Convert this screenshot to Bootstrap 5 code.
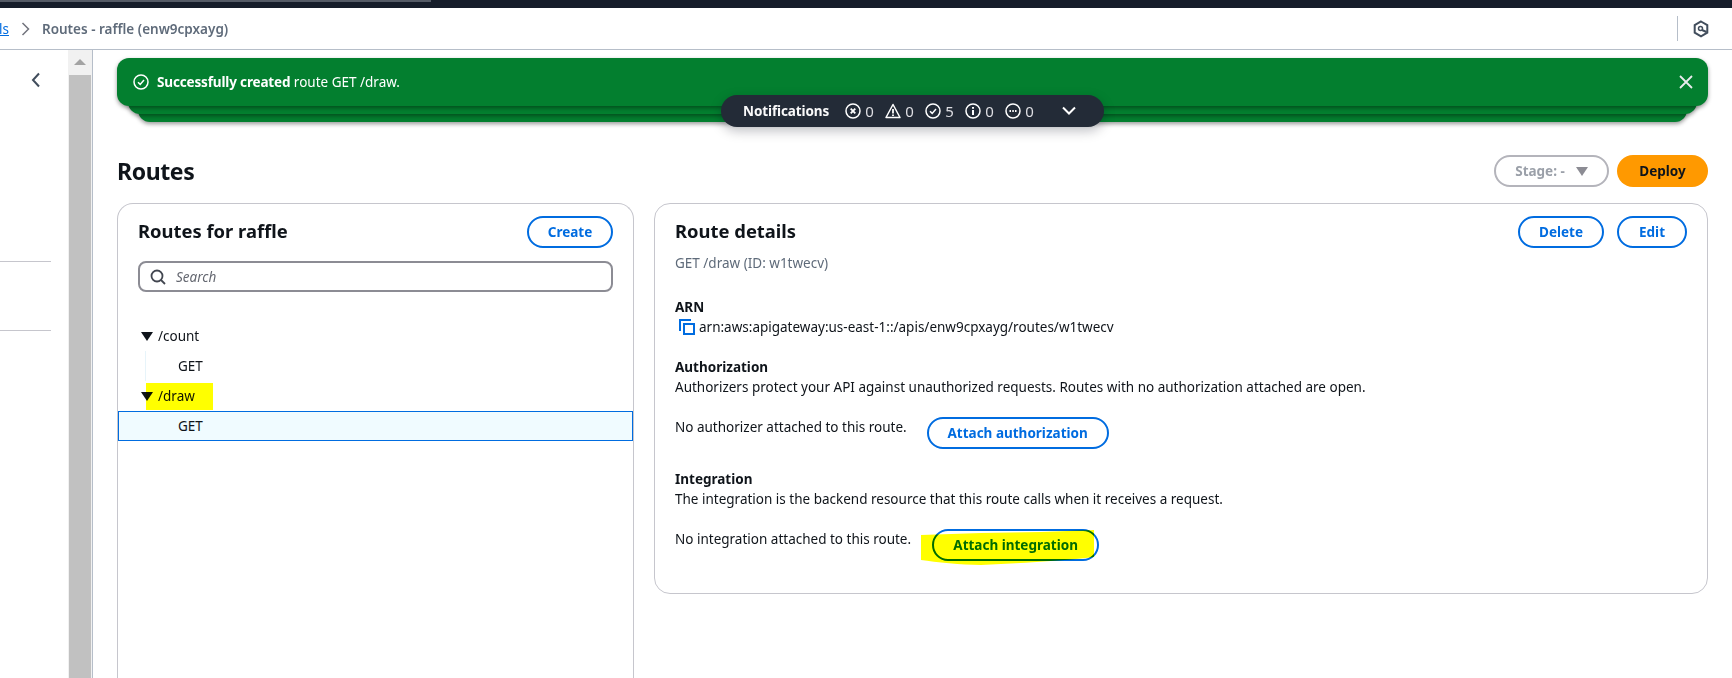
<!DOCTYPE html>
<html lang="en">

<head>
    <meta charset="UTF-8">
    <meta name="viewport" content="width=device-width, initial-scale=1.0">
    <title>Routes - raffle</title>
    <link href="https://cdn.jsdelivr.net/npm/bootstrap@5.3.0/dist/css/bootstrap.min.css" rel="stylesheet">
    <style>
        html, body { height: 678px; overflow: hidden; }
        body { font-family: "Noto Sans", "Open Sans", sans-serif; font-size: 13.5px; line-height: 20px; color: #0f141a; background: #fff; }
        .app-top { height: 8px; background: #161d2a; }
        .app-top-thumb { width: 431px; height: 2px; background: #555b66; }
        .crumb-bar { height: 42px; border-bottom: 1px solid #b6bec9; }
        .crumb-link { color: #006ce0; text-decoration: underline; width: 9px; overflow: hidden; direction: rtl; }
        .crumb-now { color: #5f6b7a; font-weight: 600; margin-left: 12px; }
        .crumb-sep { margin-left: 12px; }
        .crumb-tool { width: 55px; height: 25px; border-left: 1px solid #b6bec9; padding-left: 15px; }
        .app-body { height: 628px; }
        .side-nav { width: 68px; }
        .side-line { border-top: 1px solid #c6c6cd; width: 51px; }
        .side-back { margin: 19px 0 0 31px; }
        .side-line-a { margin-top: 172px; }
        .side-line-b { margin-top: 68px; }
        .fake-scroll { width: 25px; background: #f1f1f1; border-right: 1px solid #b6bec9; }
        .fake-scroll-arrow { height: 25px; padding-top: 9px; }
        .fake-scroll-thumb { background: #c1c1c1; width: 22px; margin-left: 1px; height: 603px; }
        .page-main { padding: 8px 24px 0; width: 1639px; }
        .flash-stack { height: 64px; }
        .flash-top { height: 48px; background: #037f2f; color: #fff; border-radius: 12px; padding: 0 16px; box-shadow: 0 2px 4px rgba(0,0,0,.4); }
        .flash-top strong { letter-spacing: -.15px; }
        .flash-layer { left: 11px; right: 11px; top: 10px; height: 46px; background: #037f2f; border-radius: 12px; box-shadow: 0 2px 4px rgba(0,0,0,.4); }
        .flash-layer-b { left: 21px; right: 21px; top: 18px; }
        .flash-close { margin-left: auto; margin-right: -1px; }
        .notif-pill { left: 604px; top: 37px; width: 383px; height: 32px; background: #232b37; color: #dedee3; border-radius: 16px; padding-left: 22px; box-shadow: 0 4px 12px rgba(0,7,22,.25); }
        .notif-title { font-weight: 700; color: #f9f9fa; margin-right: 16px; letter-spacing: -.1px; }
        .notif-item { width: 40px; gap: 4px; font-size: 15px; flex-shrink: 0; }
        .notif-caret { margin-left: 17px; }
        .page-head { height: 32px; margin-top: 33px; margin-bottom: 16px; }
        .page-title { font-size: 23px; line-height: 30px; font-weight: 700; margin: 0; letter-spacing: -.4px; }
        .aws-btn { border: 2px solid #006ce0; color: #006ce0; background: #fff; font-size: 13.5px; font-weight: 700; line-height: 20px; height: 32px; padding: 0; border-radius: 20px; white-space: nowrap; }
        .aws-btn:hover { color: #006ce0; background: #fff; border-color: #006ce0; }
        .btn-create, .btn-delete { width: 86px; }
        .btn-delete { margin-right: 13px; }
        .btn-edit { width: 70px; }
        .stage-btn { width: 115px; height: 32px; border: 2px solid #b4b4bb; border-radius: 20px; color: #9ba0a9; font-weight: 700; gap: 11px; }
        .deploy-btn { width: 91px; height: 32px; background: #f90; color: #0f141a; font-weight: 700; font-size: 13.5px; border-radius: 20px; border: 0; padding: 0; }
        .panel-row { gap: 20px; align-items: flex-start; }
        .routes-panel { width: 517px; height: 475px; border: 1px solid #c6c6cd; border-bottom: 0; border-radius: 16px 16px 0 0; }
        .detail-panel { width: 1054px; height: 391px; border: 1px solid #c6c6cd; border-radius: 16px; padding: 12px 20px; }
        .panel-title { font-size: 18.4px; line-height: 24px; font-weight: 700; margin: 0; }
        .title-lift { margin-top: -2px; }
        .routes-head { padding: 12px 20px 13px; }
        .search-box { margin: 0 20px 0; height: 31px; border: 2px solid #8c8c94; border-radius: 8px; padding-left: 10px; gap: 10px; color: #656871; font-style: italic; }
        .tree-list { margin-top: 29px; }
        .tree-row { height: 30px; padding-left: 40px; position: relative; }
        .tree-parent { padding-left: 40px; }
        .tree-caret { margin-left: -17px; margin-right: 5px; }
        .tree-child { padding-left: 60px; }
        .tree-child-line { position: absolute; left: 27px; top: 0; bottom: 0; border-left: 1px solid #e7f4fa; }
        .tree-active { background: #f0fbff; border: 1px solid #006ce0; margin: 0; padding-left: 59px; height: 30px; }
        .hl-mark { position: absolute; background: #ff0; mix-blend-mode: multiply; }
        .hl-draw { left: 28px; top: 2px; width: 67px; height: 27px; }
        .hl-attach { left: 246px; top: 0; mix-blend-mode: multiply; position: absolute; pointer-events: none; }
        .detail-sub { color: #5f6b7a; margin-top: 5px; }
        .detail-label { font-weight: 700; }
        .detail-block { margin-top: 24px; }
        .detail-block-b { margin-top: 20px; }
        .copy-ico { margin: 0 4px 0 4px; }
        .attach-row { margin-top: 20px; }
        .attach-auth { margin-left: 20px; width: 182px; }
        .attach-int { margin-left: 21px; width: 167px; }
    </style>
</head>

<body>
    <div class="app-top"><div class="app-top-thumb"></div></div>

    <!-- breadcrumb bar -->
    <div class="crumb-bar d-flex align-items-center">
        <span class="crumb-link">ls</span>
        <svg class="crumb-sep" width="9" height="14" viewBox="0 0 9 14"><path d="M1.5 1l6 6-6 6" fill="none" stroke="#72747d" stroke-width="1.5"/></svg>
        <span class="crumb-now">Routes - raffle (enw9cpxayg)</span>
        <div class="crumb-tool d-flex align-items-center ms-auto">
            <svg width="16" height="18" viewBox="0 0 16 18"><path d="M8 1.5l6.300 3.600v7.600L8 16.400l-6.300-3.700V5.100z" fill="none" stroke="#414d5c" stroke-width="2"/><circle cx="7.500" cy="8.500" r="2" fill="none" stroke="#414d5c" stroke-width="1.500"/><path d="M9 10l4.500 2" fill="none" stroke="#414d5c" stroke-width="2"/></svg>
        </div>
    </div>

    <div class="app-body d-flex overflow-hidden">
        <div class="side-nav flex-shrink-0">
            <div class="side-back">
                <svg width="10" height="16" viewBox="0 0 10 16"><path d="M8 1.500L2 8l6 6.500" fill="none" stroke="#414d5c" stroke-width="2"/></svg>
            </div>
            <div class="side-line side-line-a"></div>
            <div class="side-line side-line-b"></div>
        </div>
        <div class="fake-scroll flex-shrink-0">
            <div class="fake-scroll-arrow d-flex justify-content-center">
                <svg width="12" height="6" viewBox="0 0 12 6"><path d="M0 6l6-6 6 6z" fill="#a3a3a3"/></svg>
            </div>
            <div class="fake-scroll-thumb"></div>
        </div>

        <div class="page-main flex-shrink-0">
            <!-- flash notification stack -->
            <div class="flash-stack position-relative">
                <div class="flash-layer flash-layer-b position-absolute"></div>
                <div class="flash-layer position-absolute"></div>
                <div class="flash-top position-relative d-flex align-items-center">
                    <svg class="me-2" width="16" height="16" viewBox="0 0 16 16" fill="none" stroke="#fff" stroke-width="1.500"><circle cx="8" cy="8" r="7"/><path d="M5 8.200l2.200 2.200L11 6"/></svg>
                    <span><strong>Successfully created</strong> route GET /draw.</span>
                    <svg class="flash-close" width="14" height="14" viewBox="0 0 14 14"><path d="M1 1l12 12M13 1L1 13" stroke="#e9ebed" stroke-width="1.800"/></svg>
                </div>
                <div class="notif-pill position-absolute d-flex align-items-center">
                    <span class="notif-title">Notifications</span>
                    <span class="notif-item d-flex align-items-center">
                        <svg width="16" height="16" viewBox="0 0 16 16" fill="none" stroke="#fff" stroke-width="1.500"><circle cx="8" cy="8" r="7"/><path d="M5.700 5.700l4.600 4.600M10.300 5.700l-4.600 4.600" stroke-width="1.800"/></svg>0
                    </span>
                    <span class="notif-item d-flex align-items-center">
                        <svg width="16" height="16" viewBox="0 0 16 16" fill="none" stroke="#fff" stroke-width="1.500"><path d="M8 1.500L15 14.500H1z" stroke-linejoin="round"/><path d="M8 6v4.500M8 11.500v1.500" stroke-width="1.800"/></svg>0
                    </span>
                    <span class="notif-item d-flex align-items-center">
                        <svg width="16" height="16" viewBox="0 0 16 16" fill="none" stroke="#fff" stroke-width="1.500"><circle cx="8" cy="8" r="7"/><path d="M5 8.200l2.200 2.200L11 6"/></svg>5
                    </span>
                    <span class="notif-item d-flex align-items-center">
                        <svg width="16" height="16" viewBox="0 0 16 16" fill="none" stroke="#fff" stroke-width="1.500"><circle cx="8" cy="8" r="7"/><path d="M8 7v5M8 4v1.800" stroke-width="2"/></svg>0
                    </span>
                    <span class="notif-item d-flex align-items-center">
                        <svg width="16" height="16" viewBox="0 0 16 16" fill="none" stroke="#fff" stroke-width="1.500"><circle cx="8" cy="8" r="7"/><path d="M4.500 8h1.500M7.300 8h1.500M10 8h1.500" stroke-width="2"/></svg>0
                    </span>
                    <svg class="notif-caret" width="14" height="10" viewBox="0 0 14 10"><path d="M1 1.500l6 6 6-6" fill="none" stroke="#fff" stroke-width="2"/></svg>
                </div>
            </div>

            <div class="page-head d-flex align-items-center">
                <h1 class="page-title me-auto">Routes</h1>
                <div class="stage-btn d-flex align-items-center justify-content-center me-2">
                    <span>Stage: -</span>
                    <svg width="12" height="9" viewBox="0 0 12 9"><path d="M0 0h12L6 9z" fill="#8c8c94"/></svg>
                </div>
                <button class="btn deploy-btn" type="button">Deploy</button>
            </div>

            <div class="panel-row d-flex">
                <div class="routes-panel flex-shrink-0">
                    <div class="routes-head d-flex align-items-center justify-content-between">
                        <h2 class="panel-title title-lift">Routes for raffle</h2>
                        <button class="btn aws-btn btn-create" type="button">Create</button>
                    </div>
                    <div class="search-box d-flex align-items-center">
                        <svg width="16" height="16" viewBox="0 0 16 16" fill="none" stroke="#424650" stroke-width="1.800"><circle cx="7" cy="7" r="5.500"/><path d="M11 11l4 4"/></svg>
                        <span>Search</span>
                    </div>
                    <div class="tree-list">
                        <div class="tree-row tree-parent d-flex align-items-center">
                            <svg class="tree-caret" width="12" height="9" viewBox="0 0 12 9"><path d="M0 0h12L6 9z" fill="#0f141a"/></svg>
                            <span>/count</span>
                        </div>
                        <div class="tree-row tree-child d-flex align-items-center">
                            <span class="tree-child-line"></span>GET
                        </div>
                        <div class="tree-row tree-parent d-flex align-items-center">
                            <svg class="tree-caret" width="12" height="9" viewBox="0 0 12 9"><path d="M0 0h12L6 9z" fill="#0f141a"/></svg>
                            <span>/draw</span>
                            <span class="hl-mark hl-draw"></span>
                        </div>
                        <div class="tree-row tree-active d-flex align-items-center">GET</div>
                    </div>
                </div>

                <div class="detail-panel flex-shrink-0">
                    <div class="d-flex align-items-center">
                        <h2 class="panel-title title-lift me-auto">Route details</h2>
                        <button class="btn aws-btn btn-delete" type="button">Delete</button>
                        <button class="btn aws-btn btn-edit" type="button">Edit</button>
                    </div>
                    <div class="detail-sub">GET /draw (ID: w1twecv)</div>

                    <div class="detail-block">
                        <div class="detail-label">ARN</div>
                        <div class="d-flex align-items-center">
                            <svg class="copy-ico" width="16" height="16" viewBox="0 0 16 16" fill="none" stroke="#006ce0" stroke-width="2"><path d="M1 12V1h11"/><rect x="5" y="5" width="10" height="10"/></svg>
                            <span>arn:aws:apigateway:us-east-1::/apis/enw9cpxayg/routes/w1twecv</span>
                        </div>
                    </div>

                    <div class="detail-block-b">
                        <div class="detail-label">Authorization</div>
                        <div>Authorizers protect your API against unauthorized requests. Routes with no authorization attached are open.</div>
                        <div class="attach-row d-flex align-items-start">
                            <span>No authorizer attached to this route.</span>
                            <button class="btn aws-btn attach-auth" type="button">Attach authorization</button>
                        </div>
                    </div>

                    <div class="detail-block-b">
                        <div class="detail-label">Integration</div>
                        <div>The integration is the backend resource that this route calls when it receives a request.</div>
                        <div class="attach-row d-flex align-items-start position-relative">
                            <span>No integration attached to this route.</span>
                            <button class="btn aws-btn attach-int" type="button">Attach integration</button>
                            <svg class="hl-attach" width="174" height="38" viewBox="0 0 174 38"><path d="M0 6L60 4 120 3 173 1V28C140 32 100 34 60 36 40 36 15 33 0 31z" fill="#ff0"/></svg>
                        </div>
                    </div>
                </div>
            </div>
        </div>
    </div>

    <script src="https://cdn.jsdelivr.net/npm/bootstrap@5.3.0/dist/js/bootstrap.bundle.min.js"></script>
</body>

</html>
